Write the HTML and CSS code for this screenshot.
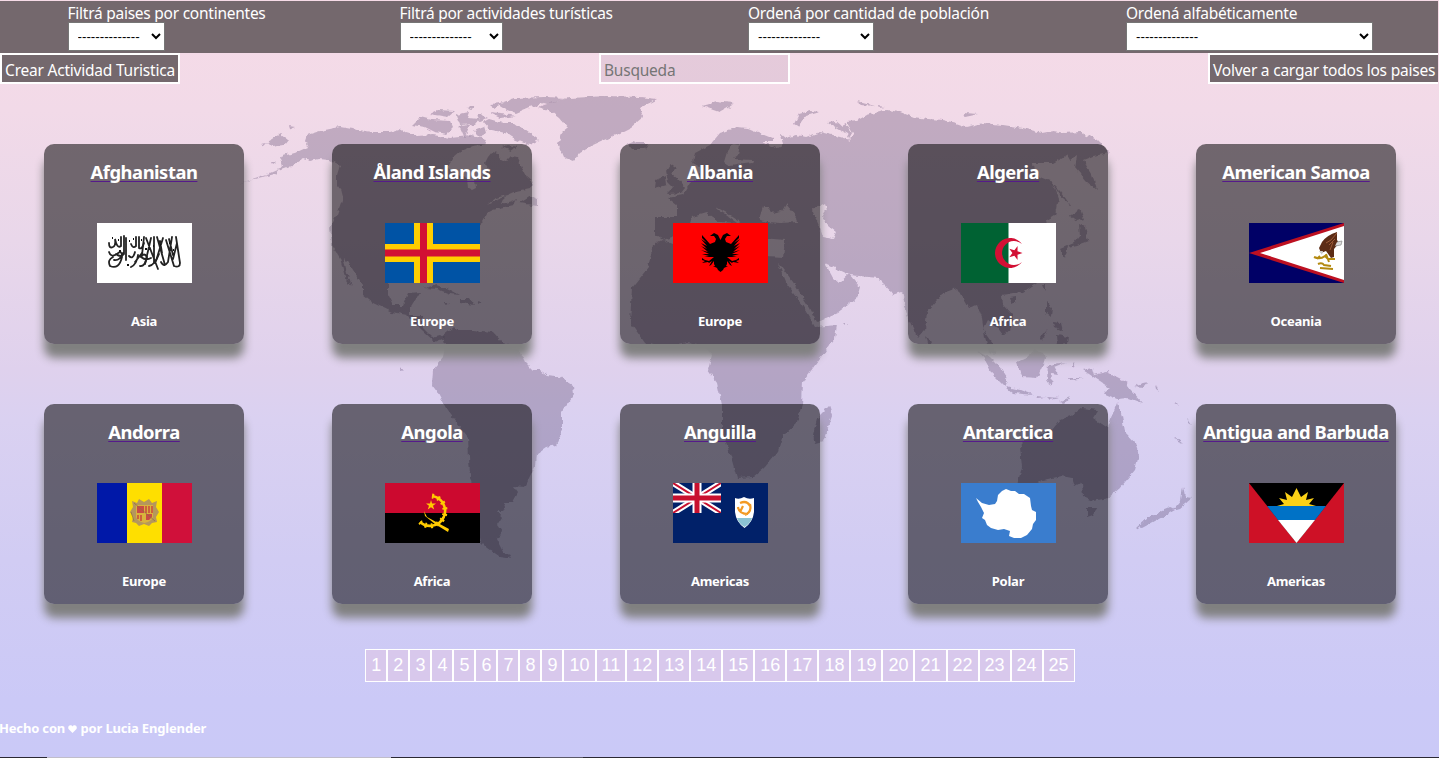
FILE: index.html
```html
<!DOCTYPE html>
<html lang="es">
<head>
<meta charset="utf-8">
<title>Paises</title>
<link rel="stylesheet" href="styles.css">
</head>
<body>
<svg class="world" viewBox="0 0 1439 758" aria-hidden="true">
  <filter id="coast" x="0" y="0" width="100%" height="100%"><feTurbulence type="fractalNoise" baseFrequency=".18" numOctaves="2" seed="4"/><feDisplacementMap in="SourceGraphic" scale="5" xChannelSelector="R" yChannelSelector="G"/><feGaussianBlur stdDeviation=".6"/></filter>
  <g class="land" filter="url(#coast)">
    <!-- North and Central America -->
    <path d="M307 135L320 131 340 127 358 130 373 132 390 132 400 129 407 133 418 136 433 135 450 138 470 136 483 138 487 144 473 146 460 151 453 157 447 168 455 174 467 178 468 188 472 190 476 188 475 180 484 174 488 168 485 163 488 157 492 152 497 153 501 159 507 162 512 157 517 158 522 168 527 177 533 182 530 188 516 191 507 195 496 198 487 205 497 200 505 197 502 204 517 199 514 205 500 208 493 210 487 213 482 222 472 230 465 240 455 253 452 262 457 275 456 281 450 276 445 265 430 265 415 268 402 270 390 278 388 284 388 295 393 305 403 305 408 293 420 292 416 299 413 303 410 308 410 315 422 315 422 322 423 328 432 337 440 335 445 338 435 342 422 330 407 315 392 312 373 303 363 295 363 285 355 273 348 262 343 257 347 272 352 287 345 277 340 258 332 245 330 228 337 215 343 198 341 190 337 185 337 175 340 165 330 160 318 159 310 161 303 159 292 166 278 171 283 165 280 157 297 152 308 147 305 141Z"/>
    <!-- South America -->
    <path d="M443 335L453 327 456 330 473 330 493 332 503 343 518 348 525 362 533 370 540 370 547 375 560 377 573 385 574 395 562 412 562 430 557 445 546 447 537 453 536 465 525 487 513 486 518 493 513 502 503 502 505 508 498 512 502 517 497 525 502 532 497 540 503 552 512 556 507 558 500 557 487 548 481 542 475 515 475 497 470 477 468 437 457 423 447 410 438 393 432 385 433 370 443 358 445 345Z"/>
    <!-- Greenland and Iceland -->
    <path d="M538 108L550 102 570 98 607 96 640 97 657 99 640 108 643 117 630 128 620 133 604 140 593 145 580 153 573 161 563 157 558 145 562 133 568 128 560 118 552 112ZM627 143L632 141 637 143 648 143 645 149 632 149Z"/>
    <!-- Arctic archipelago -->
    <path d="M412 125L420 117 432 120 450 121 453 128 447 134 435 132 425 127ZM430 114L438 110 455 111 448 117ZM498 104L515 98 545 97 567 98 552 102 530 107 516 113 508 110ZM490 113L510 115 516 116 500 118ZM456 115L470 112 468 118 479 119 475 124 460 125ZM459 126L470 125 466 134 474 136 464 137ZM474 131L484 127 486 134 480 137ZM489 119L503 123 515 123 529 133 539 140 529 145 514 139 505 133 489 129 483 122ZM465 107L475 106 472 110ZM490 104L502 103 495 108ZM477 113L488 118 479 121ZM502 147L511 151 517 147 508 145Z"/>
    <!-- Aleutians and small northern islands -->
    <path d="M267 142L280 134 288 140 284 145 272 147ZM289 126L295 127 290 129ZM240 183L258 177 270 173 279 169 275 174 258 178ZM261 144L267 143 264 146ZM271 161L275 161 272 163Z"/>
    <!-- Caribbean -->
    <path d="M425 288L436 285 449 289 460 295 450 294 437 289ZM460 299L470 299 474 305 460 303ZM444 303L450 303 447 305ZM477 302L482 303 479 305ZM400 368L404 370 400 371ZM531 196L538 199 538 206 520 203Z"/>
    <!-- Eurasia and Africa; inner loops are seas -->
    <path fill-rule="evenodd" d="M693 163L695 153 710 145 720 133 737 127 748 128 773 138 773 142 763 142 775 148 783 144 781 134 786 138 797 135 806 137 820 132 840 137 850 140 847 134 833 126 827 122 836 121 842 126 846 124 852 133 847 142 854 135 850 128 846 121 858 120 867 115 887 110 900 112 913 117 928 119 943 120 956 123 967 127 983 123 1003 125 1023 128 1042 133 1053 131 1065 133 1080 132 1097 140 1110 153 1093 156 1083 160 1092 175 1097 190 1086 181 1075 168 1077 155 1070 160 1067 155 1053 163 1033 163 1034 172 1040 177 1052 182 1058 198 1055 215 1047 220 1050 235 1044 239 1038 228 1030 228 1036 240 1042 262 1035 284 1023 292 1013 293 1002 295 1003 305 1012 315 1012 327 1003 335 997 327 988 320 983 330 992 343 996 355 989 352 985 338 982 318 977 305 968 308 957 288 943 293 927 312 925 330 918 338 908 318 902 292 893 295 887 287 878 278 850 275 833 267 825 263 833 278 839 283 849 274 860 287 857 298 837 313 817 322 810 308 793 282 782 267 778 263 787 285 802 305 815 327 837 325 835 338 820 358 803 382 802 404 797 422 783 435 778 451 765 467 753 477 737 478 731 457 722 430 722 405 717 383 708 370 712 355 704 346 687 343 664 348 645 343 630 322 632 288 648 268 653 245 663 240 655 235 655 217 677 217 677 205 668 198 683 195 690 183 700 175 700 167ZM663 240L675 236 690 225 692 217 706 213 720 222 737 223 719 210 716 207 725 212 745 225 760 224 762 238 785 240 783 258 767 257 745 255 720 250 673 244ZM763 207L768 208 773 213 782 211 786 204 797 217 798 222 780 223 767 222 759 219ZM727 152L733 144 740 145 738 155 733 159 753 160 752 163 730 166 724 162ZM812 210L825 203 827 209 822 217 828 226 836 232 833 239 823 237 820 228Z"/>
    <!-- Britain and Ireland -->
    <path d="M666 170L670 164 677 169 672 174 679 180 685 188 681 193 668 194 673 187 668 182ZM656 180L665 176 666 185 655 188Z"/>
    <!-- Svalbard, Novaya Zemlya and neighbours -->
    <path d="M702 106L717 102 733 104 719 112ZM723 102L734 103 727 105ZM794 124L799 114 810 111 820 112 806 116 799 127ZM856 101L875 106 861 105ZM878 106L886 107 880 108ZM963 113L979 114 965 117Z"/>
    <!-- Japan and Sakhalin -->
    <path d="M1050 181L1061 192 1071 206 1063 199ZM1072 213L1080 209 1084 219 1077 221 1070 216ZM1079 224L1085 227 1088 241 1077 245 1068 247 1065 257 1060 249 1074 243 1080 235Z"/>
    <!-- Philippines, Indonesia, New Guinea -->
    <path d="M1010 298L1016 297 1016 302 1012 304ZM1042 284L1045 284 1045 291ZM1046 302L1052 307 1051 317 1046 313ZM1053 322L1061 323 1063 331 1054 327ZM1057 335L1068 337 1067 344 1058 345ZM1040 338L1047 330 1042 340ZM926 336L932 342 929 347ZM977 350L990 357 998 365 1008 380 1005 387 993 375 985 360ZM1017 362L1026 358 1035 350 1043 352 1045 358 1043 365 1037 378 1022 377ZM1006 387L1020 390 1033 395 1013 393ZM1036 396L1046 397 1037 398ZM1047 397L1060 398 1050 400ZM1059 402L1070 397 1065 403ZM1048 365L1066 362 1054 367 1058 374 1052 373 1051 386 1047 380ZM1072 361L1076 366 1072 368ZM1069 378L1084 378 1070 380ZM1083 370L1092 368 1094 375 1107 372 1127 382 1130 390 1142 403 1128 398 1117 399 1103 393 1110 388 1098 380ZM1133 386L1143 383 1148 382 1144 387ZM1155 385L1159 391 1156 389ZM1175 402L1178 404 1176 405ZM1187 418L1192 425 1189 423ZM1175 437L1183 444 1178 442ZM843 323L847 323 845 325Z"/>
    <!-- Australia, Tasmania, New Zealand, Madagascar -->
    <path d="M1052 430L1060 420 1073 415 1082 408 1098 410 1093 418 1108 428 1113 413 1117 403 1122 417 1125 432 1135 443 1139 455 1135 470 1120 488 1108 498 1093 501 1083 497 1082 483 1075 487 1072 478 1062 476 1043 480 1030 487 1017 485 1022 467 1020 447 1025 440ZM1087 508L1098 508 1093 515 1087 517ZM1183 487L1185 497 1192 498 1180 508 1173 510 1181 500ZM1170 508L1175 510 1157 520 1142 528 1137 527 1147 518ZM829 406L832 415 823 442 815 444 813 435 817 418Z"/>
  </g>
</svg>

<div class="page">
  <header class="filters">
    <div class="filter filter-continent"><label>Filtrá paises por continentes</label><select><option>--------------</option></select></div>
    <div class="filter filter-activity"><label>Filtrá por actividades turísticas</label><select><option>--------------</option></select></div>
    <div class="filter filter-population"><label>Ordená por cantidad de población</label><select><option>--------------</option></select></div>
    <div class="filter filter-alpha"><label>Ordená alfabéticamente</label><select><option>--------------</option></select></div>
  </header>

  <nav class="actions">
    <button class="action create">Crear Actividad Turistica</button>
    <input class="search" type="text" placeholder="Busqueda">
    <button class="action reload">Volver a cargar todos los paises</button>
  </nav>

  <main class="countries">
    <article class="card">
      <a href="#"><h3>Afghanistan</h3></a>
      <svg class="flag" viewBox="0 0 95 60"><rect width="95" height="60" fill="#fff"/>
        <g fill="none" stroke="#222" stroke-width="1.800" stroke-linecap="round">
          <path d="M79 14L83 40Q83 45 77 43L69 17M75 14L71 39Q67 45 64 39M66 15L59 38M60 14L68 42M57 14V40M54 15L48 41M49 15L61 46M47 14L45 32M80 20L76 36M72 16L76 32M63 18L65 30"/>
          <path d="M12 20Q12 26 16 24Q19 23 18 16Q20 26 24 23V14M27 13V31Q24 35 19 31M12 29Q14 35 20 31Q25 26 25 34Q22 47 13 43Q10 37 16 34M17 37Q23 38 26 30M29 15V37M32 33Q36 37 38 29M34 21Q36 26 39 23V14M42 14V25Q45 27 47 20M34 44Q40 41 41 32M43 43Q48 44 50 34Q47 29 44 34Q49 38 54 35M38 39L45 30M52 43Q58 42 62 31"/>
        </g>
        <path d="M21 17h1M32 18h1M44 17h1M15 15h1M30 42h2M56 23h1M72 20h1M76 27h1M63 22h1M48 26h2M22 28h2M36 16h1" stroke="#111" stroke-width="2"/>
      </svg>
      <h5>Asia</h5>
    </article>
    <article class="card">
      <a href="#"><h3>Åland Islands</h3></a>
      <svg class="flag" viewBox="0 0 95 60"><rect width="95" height="60" fill="#0053a5"/><path d="M29 0h19v60H29zM0 21h95v18H0z" fill="#ffce00"/><path d="M35 0h7v60h-7zM0 26.500h95v7H0z" fill="#d21034"/></svg>
      <h5>Europe</h5>
    </article>
    <article class="card">
      <a href="#"><h3>Albania</h3></a>
      <svg class="flag" viewBox="0 0 95 60"><rect width="95" height="60" fill="#f00"/>
        <path d="M47.500 17L45 12 41 10 37 13 41 13 43 16 42 19 37 21 29 12V15L34 20 28 16 34 23 28 20 34 26 28 23 35 29 28 27 36 31 29 31 36 33 31 34 41 34 36 38 32 37 29 35 29 37 32 38 29 40 35 39 36 40 39 38 36 43 38 42 41 38 41 41 42 43 40 43 44 45 45 47 47.500 49 50 47 51 45 55 43 53 43 54 41 54 38 57 42 59 43 56 38 59 40 60 39 66 40 63 38 66 37 66 35 63 37 59 38 54 34 64 34 59 33 66 31 59 31 67 27 60 29 67 23 61 26 67 20 61 23 67 16 61 20 66 15V12L58 21 53 19 52 16 54 13 58 13 54 10 50 12Z"/></svg>
      <h5>Europe</h5>
    </article>
    <article class="card">
      <a href="#"><h3>Algeria</h3></a>
      <svg class="flag" viewBox="0 0 95 60"><rect width="95" height="60" fill="#fff"/><rect width="47.500" height="60" fill="#006233"/><path d="M61 21A15 15 0 1 0 61 39A12 12 0 1 1 61 21Z" fill="#d21034"/><path d="M61.500 30L56.500 31.700 56.600 37 53.400 32.700 48.300 34.200 51.400 30 48.300 25.800 53.400 27.300 56.600 23 56.500 28.300Z" fill="#d21034"/></svg>
      <h5>Africa</h5>
    </article>
    <article class="card">
      <a href="#"><h3>American Samoa</h3></a>
      <svg class="flag" viewBox="0 0 95 60"><rect width="95" height="60" fill="#006"/><path d="M0 30L95 0V60Z" fill="#bd1021"/><path d="M11 30L95 3V57Z" fill="#fff"/>
        <path d="M88 9Q78 12 73 19L70 25 72 30 77 28 82 35 85 34 85 26 90 20 88 17Z" fill="#5c2c16"/><path d="M88 10L82 17 77 20M86 16L80 22M84 19L81 27" stroke="#9b5a38" fill="none"/><path d="M88 19L93 18 92 22 86 23" fill="#ddd" stroke="#888" stroke-width=".7"/><path d="M70 28L74 28 73 32Z" fill="#ccc"/>
        <path d="M65 34Q71 37 76 33L79 36 86 36M68 36L71 33M77 31L80 39M69 41Q73 39 75 42L82 43M71 45L84 46" stroke="#b48a10" stroke-width="2" fill="none"/></svg>
      <h5>Oceania</h5>
    </article>
    <article class="card">
      <a href="#"><h3>Andorra</h3></a>
      <svg class="flag" viewBox="0 0 95 60"><rect width="95" height="60" fill="#d0103a"/><rect width="65" height="60" fill="#fedf00"/><rect width="30" height="60" fill="#0018a8"/>
        <path d="M35 18L40 20 42 16 47 19 52 16 55 20 60 18 59 24 62 29 59 34 60 39 55 40 52 43 47 41 42 43 39 40 35 39 36 34 33 29 36 24Z" fill="#b5975b"/><path d="M39 22H56V34Q55 38 47.500 40Q40 38 39 34Z" fill="#d9b33d"/><path d="M40 23H47V30H40ZM49 31H55V34L52 37H49Z" fill="#c94b45"/><path d="M49 23V30M52 23V30M55 23V30M41 32V36M44 32V38" stroke="#c7383b" stroke-width="1.300"/><path d="M37 20L58 38M37 38L34 29" stroke="#8c7140" stroke-width=".7" fill="none"/></svg>
      <h5>Europe</h5>
    </article>
    <article class="card">
      <a href="#"><h3>Angola</h3></a>
      <svg class="flag" viewBox="0 0 95 60"><rect width="95" height="60"/><rect width="95" height="30" fill="#cc092f"/>
        <path d="M47 13A15 15 0 1 1 35 39" fill="none" stroke="#ffcb00" stroke-width="2.600"/><path d="M47 13A15 15 0 1 1 35 39" fill="none" stroke="#ffcb00" stroke-width="5" stroke-dasharray="2 4"/><path d="M39 28L42 34 64 46 63 49 50 41 40 33Z" fill="#ffcb00"/><path d="M46 17L47.100 20.500H51L48 22.700 49.200 26.500 46 24.200 42.800 26.500 44 22.700 41 20.500H45Z" fill="#ffcb00"/></svg>
      <h5>Africa</h5>
    </article>
    <article class="card">
      <a href="#"><h3>Anguilla</h3></a>
      <svg class="flag" viewBox="0 0 95 60"><rect width="95" height="60" fill="#012169"/><path d="M0 0L48 30M48 0L0 30" stroke="#fff" stroke-width="6"/><path d="M0 0L48 30M48 0L0 30" stroke="#c8102e" stroke-width="2"/><path d="M24 0V30M0 15H48" stroke="#fff" stroke-width="9"/><path d="M24 0V30M0 15H48" stroke="#c8102e" stroke-width="5"/><path d="M0 30H48V36H0ZM48 0H54V36H48Z" fill="#012169"/>
        <path d="M62 15Q66 17 71 14Q76 17 81 15V29Q80 39 71.500 45Q63 39 62 29Z" fill="#fff"/><path d="M64 35H79Q77 41 71.500 44Q66 41 64 35Z" fill="#8bc3d4"/><path d="M67 20Q74 17 77 23M77 21Q79 29 72 32M65 24Q66 31 75 31M67 29L70 23" fill="none" stroke="#f39a24" stroke-width="2.200"/></svg>
      <h5>Americas</h5>
    </article>
    <article class="card">
      <a href="#"><h3>Antarctica</h3></a>
      <svg class="flag" viewBox="0 0 95 60"><rect width="95" height="60" fill="#3a7dce"/><path d="M15 15L21 20 28 22 34 21 36 18 37 12 41 8 45 6 50 8 54 8 58 11 63 11 69 15 70 23 71 27 75 29 75 37 72 41 71 46 66 52 60 55 53 55 48 53 49 48 43 46 37 47 30 45 26 42 24 37 21 35 23 30 20 24 17 19Z" fill="#fff"/></svg>
      <h5>Polar</h5>
    </article>
    <article class="card">
      <a href="#"><h3>Antigua and Barbuda</h3></a>
      <svg class="flag" viewBox="0 0 95 60"><rect width="95" height="60" fill="#ce1126"/><path d="M0 0H95L47.500 60Z"/><path d="M28 23L35 21 30 15 38 17 36 9 43 14 47.500 5 52 14 59 9 57 17 65 15 60 21 67 23Z" fill="#fcd116"/><path d="M18 23H77L66 37H29Z" fill="#0072c6"/><path d="M29 37H66L47.500 60Z" fill="#fff"/></svg>
      <h5>Americas</h5>
    </article>
  </main>

  <nav class="pages">
    <a>1</a><a>2</a><a>3</a><a>4</a><a>5</a><a>6</a><a>7</a><a>8</a><a>9</a><a>10</a><a>11</a><a>12</a><a>13</a><a>14</a><a>15</a><a>16</a><a>17</a><a>18</a><a>19</a><a>20</a><a>21</a><a>22</a><a>23</a><a>24</a><a>25</a>
  </nav>

  <footer class="credit">
    <h5>Hecho con <svg class="heart" viewBox="0 0 9 8"><path d="M4.500 8L.5 4Q-.5 1 2 .3Q4 0 4.500 1.500Q5 0 7 .3Q9.500 1 8.500 4Z"/></svg> por Lucia Englender</h5>
  </footer>
  <div class="taskbar"><span class="taskbar-active"></span><span class="taskbar-item"></span></div>
</div>
</body>
</html>
```
FILE: styles.css
```css
* { box-sizing: border-box; }
html { height: 758px; overflow: hidden; }
body {
  margin: 0;
  height: 758px;
  overflow: hidden;
  position: relative;
  color: #fff;
  font-family: "Segoe UI", "Noto Sans", "Open Sans", sans-serif;
  background: linear-gradient(#f6dbe7 0, #f2dae8 110px, #e9d7ea 240px, #dfd1ed 370px, #dad1f1 420px, #d1ccf3 560px, #cbc9f7 700px, #cac9f7 758px);
}
.world { position: absolute; inset: 0; width: 1439px; height: 758px; }
.land { fill: rgba(65, 45, 85, .28); }
.page {
  position: relative;
  display: flex;
  flex-direction: column;
  height: 758px;
  padding-top: 1px;
}

.filters {
  display: flex;
  gap: 134px;
  width: 1438px;
  height: 52px;
  padding-left: 67.5px;
  background: #74686d;
}
.filter { display: flex; flex: none; flex-direction: column; align-items: flex-start; }
.filter label { height: 21px; font-size: 15.5px; line-height: 24px; letter-spacing: -.25px; white-space: nowrap; }
.filter select {
  height: 29px;
  padding: 4px 5px;
  border: 1px solid #767676;
  border-radius: 0;
  background-color: #fff;
  color: #000;
  font: 13.333px "Liberation Sans", sans-serif;
}
.filter-continent { width: 198px; }
.filter-continent select { width: 97px; }
.filter-activity { width: 214.5px; }
.filter-activity select { width: 103px; }
.filter-population { width: 244px; }
.filter-population select { width: 126px; }
.filter-alpha { width: 247px; }
.filter-alpha select { width: 247px; }

.actions {
  display: flex;
  justify-content: space-between;
  width: 1438px;
  height: 31px;
  overflow: hidden;
}
.action, .search {
  height: 31px;
  padding: 2px 3px 0;
  border: 2px solid #fff;
  border-radius: 0;
  color: #fff;
  font: 15.5px "Segoe UI", "Noto Sans", "Open Sans", sans-serif;
  letter-spacing: -.22px;
  white-space: nowrap;
}
.action { background: #74686d; }
.create { width: 180px; }
.reload { width: 232px; margin-right: -2px; }
.search { width: 191px; margin-left: 1px; background: rgba(128, 104, 128, .13); }
.search::placeholder { color: #757575; }

.countries {
  display: grid;
  grid-template-columns: repeat(5, 288px);
  row-gap: 60px;
  justify-items: center;
  width: 1440px;
  padding-top: 60px;
}
.card {
  display: flex;
  flex-direction: column;
  align-items: center;
  width: 200px;
  height: 200px;
  padding-top: 15px;
  border-radius: 10px;
  background: rgba(0, 0, 0, .53);
  box-shadow: 0 14px 10px gray;
}
.card a { height: 64px; color: #551a8b; text-decoration: underline 1px #551a8b; text-underline-offset: 2px; }
.card h3 {
  margin: 0;
  color: #fff;
  font-size: 18.4px;
  line-height: 25px;
  letter-spacing: -.48px;
  white-space: nowrap;
}
.flag { width: 95px; height: 60px; }
.card h5 { margin: 29px 0 0; font-size: 13px; line-height: 18px; letter-spacing: -.25px; }

.pages { display: flex; justify-content: center; width: 1440px; margin-top: 45px; }
.pages a {
  height: 33px;
  padding: 0 5px;
  border: 1px solid #fff;
  background: #d8c8ec;
  font: 18px/31px "Liberation Sans", sans-serif;
}
.credit { margin-top: 37px; height: 38px; }
.credit h5 { margin: 0 0 0 -1px; font-size: 13px; line-height: 19px; letter-spacing: -.17px; }
.heart { width: 9px; height: 8px; fill: #fff; }
.taskbar { display: flex; margin-top: auto; height: 1px; background: #2b2934; }
.taskbar-active { width: 344px; margin-left: 47px; background: #c0bdca; }
.taskbar-item { width: 43px; margin-left: 149px; background: #5b5968; }
```
